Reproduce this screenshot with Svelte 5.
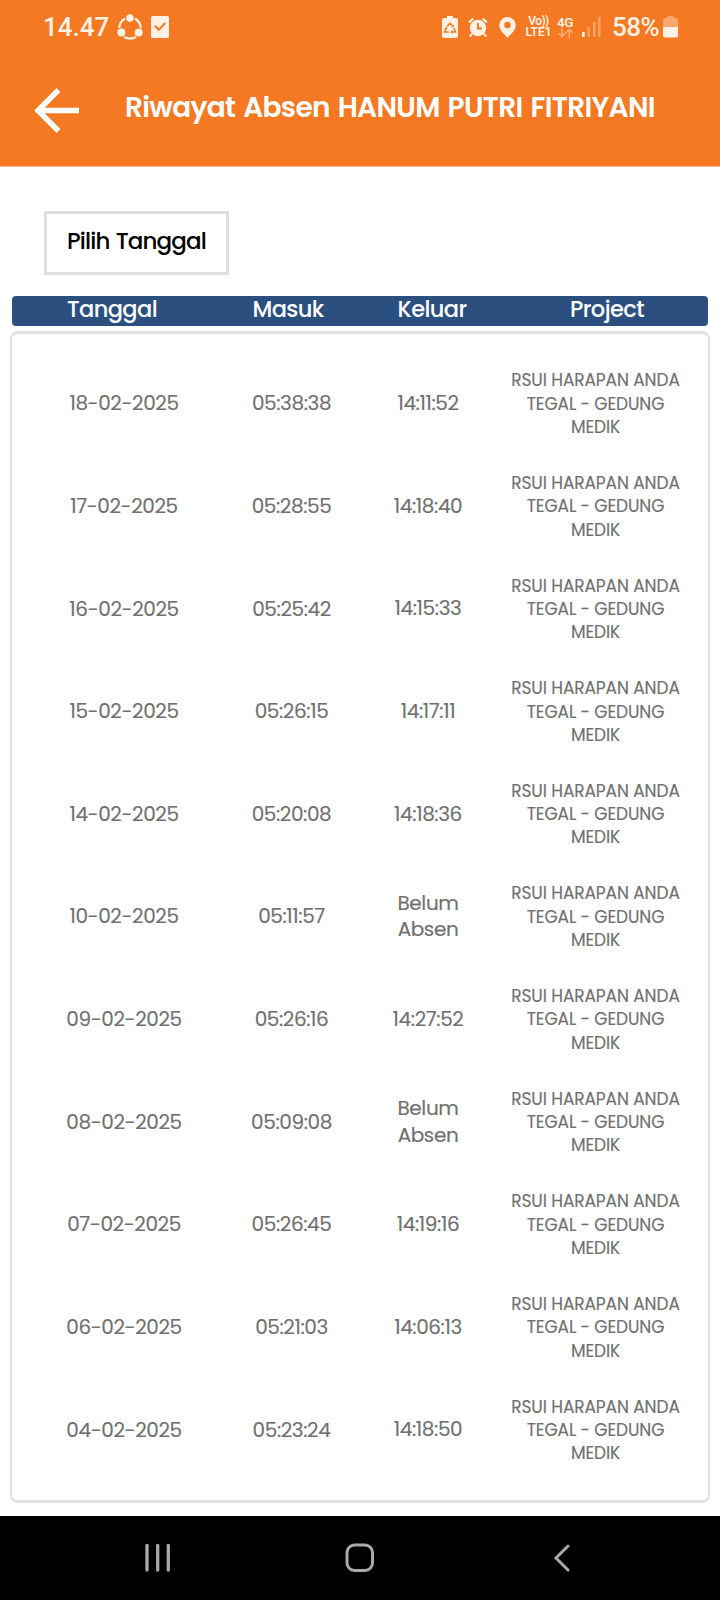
<script>
    const title = "Riwayat Absen HANUM PUTRI FITRIYANI";
    const project = "RSUI HARAPAN ANDA TEGAL - GEDUNG MEDIK";

    let rows = [
        { tanggal: "18-02-2025", masuk: "05:38:38", keluar: "14:11:52" },
        { tanggal: "17-02-2025", masuk: "05:28:55", keluar: "14:18:40" },
        { tanggal: "16-02-2025", masuk: "05:25:42", keluar: "14:15:33" },
        { tanggal: "15-02-2025", masuk: "05:26:15", keluar: "14:17:11" },
        { tanggal: "14-02-2025", masuk: "05:20:08", keluar: "14:18:36" },
        { tanggal: "10-02-2025", masuk: "05:11:57", keluar: "" },
        { tanggal: "09-02-2025", masuk: "05:26:16", keluar: "14:27:52" },
        { tanggal: "08-02-2025", masuk: "05:09:08", keluar: "" },
        { tanggal: "07-02-2025", masuk: "05:26:45", keluar: "14:19:16" },
        { tanggal: "06-02-2025", masuk: "05:21:03", keluar: "14:06:13" },
        { tanggal: "04-02-2025", masuk: "05:23:24", keluar: "14:18:50" },
    ];
</script>

<div class="screen">
    <header>
        <div class="status">
            <span class="clock">14.47</span>
            <svg class="share" width="26" height="26" viewBox="0 0 26 26">
                <path d="M8 4.500Q2.500 8 2.300 14M18 4.500Q23.500 8 23.700 14M7 23Q13 26.200 19 23" fill="none" stroke="#fff1e3" stroke-width="2.200" />
                <circle cx="13" cy="4" r="3.800" fill="#fff1e3" />
                <circle cx="4.300" cy="18.500" r="4" fill="#fff1e3" />
                <circle cx="21.700" cy="18.500" r="4" fill="#fff1e3" />
            </svg>
            <svg class="task" width="18" height="22" viewBox="0 0 18 22">
                <rect width="18" height="22" rx="1.500" fill="#fff1e3" />
                <path d="M3.800 9.800l4 4L14.300 7" fill="none" stroke="#f47922" stroke-width="2" />
            </svg>

            <div class="status-right">
                <svg width="16" height="22" viewBox="0 0 16 22">
                    <path d="M5 0h6v2h3q2 0 2 2v16q0 2-2 2H2q-2 0-2-2V4q0-2 2-2h3z" fill="#fff1e3" />
                    <path d="M5 10.500L8 7l3 3.500M12 12l1.500 4H9.500M6.800 16H2.500L4 12" fill="none" stroke="#f47922" stroke-width="1.400" stroke-linejoin="round" />
                    <path d="M11.800 8.500v2.700H9.300zM10.500 14v4L8.300 16zM2.200 12.800l2.300-2 1.300 2.800z" fill="#f47922" />
                </svg>
                <svg class="alarm" width="20" height="21" viewBox="0 0 20 21">
                    <circle cx="10" cy="11" r="8.200" fill="#fff1e3" />
                    <path d="M1 5.500L5.200 1.600M19 5.500l-4.200-3.900M4 17l-2.200 2.600M16 17l2.200 2.600" stroke="#fff1e3" stroke-width="2.200" />
                    <path d="M10 6v5.500h4" fill="none" stroke="#f47922" stroke-width="1.800" />
                </svg>
                <svg class="pin" width="17" height="21" viewBox="0 0 17 21">
                    <path d="M8.500 0A8.300 8.300 0 0 0 .2 8.300c0 5 4.800 8.700 8.300 12.400 3.500-3.700 8.300-7.400 8.300-12.400A8.300 8.300 0 0 0 8.500 0z" fill="#fff1e3" />
                    <circle cx="8.500" cy="8" r="3.200" fill="#f47922" />
                </svg>
                <div class="volte"><span class="vo">Vo))</span><span>LTE1</span></div>
                <div class="network">
                    <span>4G</span>
                    <svg width="15" height="10" viewBox="0 0 15 10">
                        <path d="M4 0v8.500M.5 5L4 8.700 7.500 5M11.300 10V1.500M7.800 5l3.500-3.700L14.800 5" fill="none" stroke="#f9ae79" stroke-width="1.500" />
                    </svg>
                </div>
                <svg class="signal" width="19" height="20" viewBox="0 0 19 20">
                    <rect x="0" y="15" width="2.700" height="5" fill="#fff1e3" />
                    <path d="M5.500 10h2.500v10H5.500zM11 5h2.500v15H11zM16 0h2.500v20H16z" fill="#f8a265" />
                </svg>
                <span class="percent">58%</span>
                <svg class="battery" width="15" height="22" viewBox="0 0 15 22">
                    <path d="M4.500 0h6v2H13q2 0 2 2v7H0V4q0-2 2-2h2.500z" fill="#f8a76f" />
                    <path d="M0 11h15v8.500q0 2-2 2H2q-2 0-2-2z" fill="#fff1e3" />
                </svg>
            </div>
        </div>

        <div class="toolbar">
            <svg width="46" height="46" viewBox="0 0 46 46">
                <path d="M45 22.500H4M24.500 2L4 22.500 24.500 43" fill="none" stroke="#fff" stroke-width="5.400" />
            </svg>
            <h1>{title}</h1>
        </div>
    </header>

    <main>
        <button class="pick">Pilih Tanggal</button>

        <div class="thead">
            <span class="h-tanggal">Tanggal</span>
            <span class="h-masuk">Masuk</span>
            <span class="h-keluar">Keluar</span>
            <span class="h-project">Project</span>
        </div>

        <div class="card">
            {#each rows as row}
                <div class="row">
                    <span class="tanggal">{row.tanggal}</span>
                    <span class="masuk">{row.masuk}</span>
                    <span class="keluar">{row.keluar || "Belum Absen"}</span>
                    <span class="project">{project}</span>
                </div>
            {/each}
        </div>
    </main>

    <nav>
        <svg width="26" height="28" viewBox="0 0 26 28">
            <path d="M2 1.500v24.500M12.700 1.500v24.500M23.300 1.500v24.500" stroke="#a9a9a9" stroke-width="3.300" stroke-linecap="round" />
        </svg>
        <svg class="home" width="30" height="30" viewBox="0 0 30 30">
            <rect x="2" y="2" width="25.500" height="25.500" rx="7.500" fill="none" stroke="#a9a9a9" stroke-width="3" />
        </svg>
        <svg width="18" height="28" viewBox="0 0 18 28">
            <path d="M15 2L3 14l12 12" fill="none" stroke="#a9a9a9" stroke-width="3" stroke-linecap="round" />
        </svg>
    </nav>
</div>

<style>
    :global(body) {
        margin: 0;
        background: #fff;
    }

    .screen {
        width: 720px;
        height: 1600px;
        display: flex;
        flex-direction: column;
        overflow: hidden;
        font-family: Poppins, Inter, sans-serif;
        background: #fff;
    }

    header {
        height: 166px;
        flex: none;
        border-bottom: 1px solid #f9b78a;
        background: #f47922;
        color: #fff;
    }

    .status {
        height: 54px;
        display: flex;
        align-items: center;
        padding: 0 42px 0 43px;
        font-family: Roboto, sans-serif;
        color: #fff1e3;
    }

    .clock, .percent {
        font-size: 26px;
        font-weight: 500;
    }

    .share {
        margin-left: 8px;
    }

    .task {
        margin-left: 8px;
    }

    .status-right {
        display: flex;
        align-items: center;
        margin-left: auto;
    }

    .alarm {
        margin-left: 10px;
    }

    .pin {
        margin-left: 11px;
    }

    .volte, .network {
        display: flex;
        flex-direction: column;
        align-items: center;
        font-size: 12px;
        line-height: 11px;
        font-weight: 600;
    }

    .volte {
        margin-left: 9px;
        width: 27px;
    }

    .vo {
        letter-spacing: -0.6px;
    }

    .network {
        margin-left: 5px;
        width: 16px;
        font-size: 13.5px;
        letter-spacing: -0.5px;
    }

    .signal {
        margin-left: 9px;
    }

    .percent {
        margin-left: 11px;
        width: 47px;
        letter-spacing: -0.5px;
    }

    .battery {
        margin-left: 4px;
    }

    .toolbar {
        display: flex;
        align-items: center;
        padding: 1px 0 0 34px;
        height: 112px;
    }

    h1 {
        margin: 0 0 7px 45px;
        font-size: 28px;
        font-weight: 600;
        letter-spacing: -0.7px;
        word-spacing: 2px;
        white-space: nowrap;
    }

    main {
        flex: 1;
        padding: 44px 10px 0;
    }

    .pick {
        display: block;
        box-sizing: border-box;
        width: 185px;
        height: 64px;
        margin-left: 34px;
        padding: 0 0 4px;
        border: 3px solid #dfdfdf;
        background: #fff;
        color: #000;
        font-family: inherit;
        font-size: 23px;
        font-weight: 500;
        letter-spacing: -0.85px;
        word-spacing: 1px;
        white-space: nowrap;
    }

    .thead {
        display: grid;
        grid-template-columns: 207px 138px 150px 200px;
        height: 30px;
        margin: 21px 2px 0;
        border-radius: 4px;
        background: #2b507f;
        color: #fff;
        font-size: 22.5px;
        font-weight: 500;
        letter-spacing: -0.6px;
        line-height: 27px;
        text-align: center;
    }

    .h-tanggal {
        padding-right: 7px;
    }

    .card {
        box-sizing: border-box;
        height: 1172px;
        margin-top: 5px;
        padding-top: 18px;
        border: 2px solid #e0e1e2;
        border-width: 3px 2px;
        border-radius: 8px;
    }

    .row {
        display: grid;
        grid-template-columns: 224px 111px 162px 173px;
        align-items: center;
        height: 102.64px;
        color: #707070;
        font-size: 20px;
        letter-spacing: -0.4px;
        text-align: center;
        -webkit-text-stroke: 0.15px #707070;
    }

    .keluar {
        padding: 0 30px;
        line-height: 26.5px;
    }

    .project {
        padding-top: 2px;
        font-size: 17px;
        line-height: 23.3px;
        letter-spacing: -0.1px;
    }

    nav {
        height: 84px;
        flex: none;
        display: flex;
        align-items: center;
        box-sizing: border-box;
        padding: 0 149px 0 145px;
        justify-content: space-between;
        background: #000;
    }

    .home {
        margin-right: 4px;
    }
</style>
